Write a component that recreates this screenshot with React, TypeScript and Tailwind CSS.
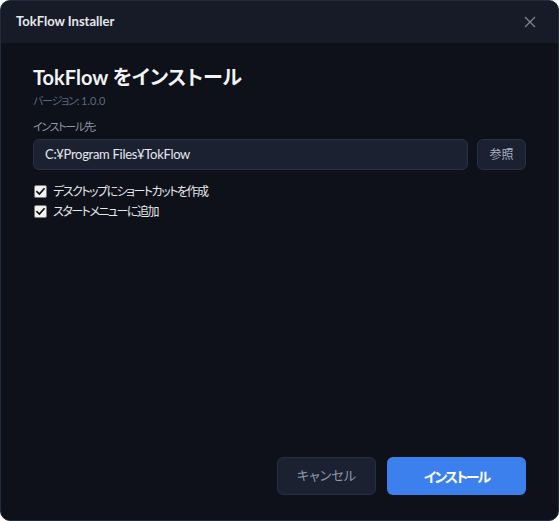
import React from "react";

function Check() {
  return (
    <span className="flex h-[13px] w-[13px] shrink-0 items-center justify-center rounded-[2px] border border-[#7a7a7a] bg-[#f3f3f3]">
      <svg width="11" height="11" viewBox="0 0 12 12" fill="none">
        <path d="M2.2 6.3 L4.8 8.8 L9.8 3.2" stroke="#111" strokeWidth="1.9" strokeLinecap="square" />
      </svg>
    </span>
  );
}

export default function App() {
  const font = {
    fontFamily: 'Lato, "Noto Sans CJK JP", sans-serif',
    fontFeatureSettings: '"palt"',
  };
  return (
    <div
      className="flex h-[521px] w-[559px] flex-col overflow-hidden rounded-[10px] border border-[#222c40] bg-[#0e1119]"
      style={font}
    >
      <div className="flex h-[42px] shrink-0 items-center justify-between bg-[#161b27] pl-[15px] pr-[22px]">
        <span className="text-[13px] font-bold text-[#e6e8ec]">TokFlow Installer</span>
        <svg width="12" height="12" viewBox="0 0 12 12">
          <path d="M1 1 L11 11 M11 1 L1 11" stroke="#7d889c" strokeWidth="1.2" />
        </svg>
      </div>
      <div className="flex flex-1 flex-col px-[32px] pb-[25px] pt-[20px]">
        <h1 className="text-[20px] font-bold leading-[28px] text-[#f1f3f6]">TokFlow をインストール</h1>
        <div className="mt-[3px] text-[11px] leading-[14px] text-[#5b6880]">
          <span className="tracking-[-1.2px]">バージョン:</span> 1.0.0
        </div>
        <div className="mt-[12px] text-[11px] leading-[14px] tracking-[-1.3px] text-[#8f98a8]">インストール先:</div>
        <div className="mt-[5px] flex gap-[9px]">
          <div className="flex h-[31px] flex-1 items-center rounded-[6px] border border-[#283246] bg-[#1b2131] px-[11px] text-[13px] tracking-[-0.3px] text-[#e6e8ec]">
            C:¥Program Files¥TokFlow
          </div>
          <button className="h-[31px] w-[49px] rounded-[6px] border border-[#283246] bg-[#1b2131] text-[12px] text-[#a7b0c0]">
            参照
          </button>
        </div>
        <div className="mt-[14px] flex flex-col gap-[5px] pl-[1px]">
          <label className="flex items-center gap-[6px] text-[12px] leading-[15px] tracking-[-1.5px] text-[#e6e8ec]">
            <Check />
            デスクトップにショートカットを作成
          </label>
          <label className="flex items-center gap-[6px] text-[12px] leading-[15px] tracking-[-1.5px] text-[#e6e8ec]">
            <Check />
            スタートメニューに追加
          </label>
        </div>
        <div className="mt-auto flex justify-end gap-[11px]">
          <button className="h-[38px] w-[99px] rounded-[6px] border border-[#263044] bg-[#1b2131] text-[13px] text-[#8e98aa]">
            キャンセル
          </button>
          <button className="h-[38px] w-[139px] rounded-[6px] bg-[#3b80ec] text-[14px] font-bold tracking-[-2px] text-white">
            インストール
          </button>
        </div>
      </div>
    </div>
  );
}
